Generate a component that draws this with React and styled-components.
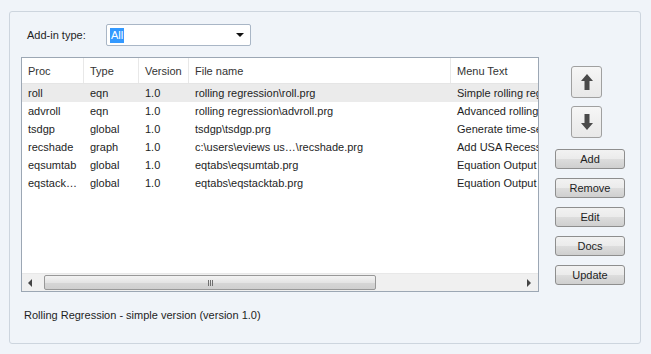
import React from "react";
import styled, { createGlobalStyle } from "styled-components";

const Global = createGlobalStyle`
  html, body { margin: 0; padding: 0; background: #f0f4f9; }
  body { font-family: "Liberation Sans", Tahoma, sans-serif; font-size: 11px; color: #1e1e1e; }
`;

const Page = styled.div`
  width: 651px;
  height: 354px;
  padding: 11px 10px 0 9px;
  box-sizing: border-box;
`;

const GroupBox = styled.div`
  width: 632px;
  height: 333px;
  box-sizing: border-box;
  border: 1px solid #cdd5de;
  border-radius: 3px;
  padding: 12px 0 0 11px;
  display: flex;
  flex-direction: column;
`;

const TypeRow = styled.div`
  display: flex;
  align-items: center;
  gap: 13px;
  padding-left: 6px;
  height: 22px;
`;

const Label = styled.span`
  width: 66px;
`;

const Combo = styled.div`
  width: 145px;
  height: 22px;
  box-sizing: border-box;
  border: 1px solid #a9b6c6;
  border-radius: 2px;
  background: #fff;
  display: flex;
  align-items: center;
  justify-content: space-between;
  padding: 0 6px 0 3px;
`;

const Selected = styled.span`
  background: #3399ff;
  color: #fff;
  padding: 1px 1px;
  line-height: 13px;
`;

const MainRow = styled.div`
  display: flex;
  margin-top: 11px;
`;

const ListBox = styled.div`
  width: 518px;
  height: 235px;
  box-sizing: border-box;
  border: 1px solid #9ca7b4;
  background: #fff;
  display: flex;
  flex-direction: column;
  overflow: hidden;
`;

const Header = styled.div`
  display: flex;
  height: 25px;
  border-bottom: 1px solid #e5e5e5;
  flex-shrink: 0;
`;

const HeadCell = styled.div`
  width: ${(p) => p.w}px;
  flex-shrink: 0;
  box-sizing: border-box;
  padding-left: 6px;
  display: flex;
  align-items: center;
  border-right: ${(p) => (p.last ? "none" : "1px solid #e8e8e8")};
  white-space: nowrap;
  overflow: hidden;
  color: #333;
`;

const Body = styled.div`
  flex: 1;
`;

const Row = styled.div`
  display: flex;
  height: 18px;
  align-items: center;
  background: ${(p) => (p.sel ? "#ebebeb" : "transparent")};
`;

const Cell = styled.div`
  width: ${(p) => p.w}px;
  flex-shrink: 0;
  box-sizing: border-box;
  padding-left: 6px;
  white-space: nowrap;
  overflow: hidden;
`;

const HScroll = styled.div`
  height: 17px;
  display: flex;
  align-items: center;
  background: #f0f0f0;
  border-top: 1px solid #e8e8e8;
  flex-shrink: 0;
`;

const ArrowBox = styled.div`
  width: 17px;
  height: 17px;
  display: flex;
  align-items: center;
  justify-content: center;
`;

const Track = styled.div`
  flex: 1;
  height: 17px;
  display: flex;
  align-items: center;
`;

const Thumb = styled.div`
  width: 332px;
  height: 15px;
  margin-left: 5px;
  box-sizing: border-box;
  border: 1px solid #989898;
  border-radius: 2px;
  background: linear-gradient(#f3f3f3, #e4e4e4 50%, #d6d6d6 51%, #cfcfcf);
  display: flex;
  align-items: center;
  justify-content: center;
`;

const Grip = styled.div`
  display: flex;
  gap: 1px;
`;

const GripLine = styled.span`
  width: 1px;
  height: 6px;
  background: #6f6f6f;
`;

const SideCol = styled.div`
  width: 92px;
  display: flex;
  flex-direction: column;
  align-items: flex-start;
  padding-top: 9px;
`;

const ArrowButton = styled.div`
  width: 31px;
  height: 32px;
  box-sizing: border-box;
  border: 1px solid #a0a0a0;
  border-radius: 3px;
  background: linear-gradient(#f6f6f6, #e8e8e8);
  display: flex;
  align-items: center;
  justify-content: center;
  margin-left: 32px;
  margin-bottom: ${(p) => p.mb}px;
`;

const Button = styled.div`
  width: 70px;
  height: 20px;
  box-sizing: border-box;
  border: 1px solid #8e8e8e;
  border-radius: 3px;
  background: linear-gradient(#f2f2f2, #ebebeb 50%, #dddddd 51%, #cfcfcf);
  display: flex;
  align-items: center;
  justify-content: center;
  margin-left: 16px;
  margin-bottom: 9px;
  color: #1e1e1e;
`;

const Status = styled.div`
  margin-top: 15px;
  padding-left: 3px;
`;

const cols = [62, 55, 50, 262, 90];
const heads = ["Proc", "Type", "Version", "File name", "Menu Text"];
const rows = [
  ["roll", "eqn", "1.0", "rolling regression\\roll.prg", "Simple rolling regression"],
  ["advroll", "eqn", "1.0", "rolling regression\\advroll.prg", "Advanced rolling regression"],
  ["tsdgp", "global", "1.0", "tsdgp\\tsdgp.prg", "Generate time-series"],
  ["recshade", "graph", "1.0", "c:\\users\\eviews us…\\recshade.prg", "Add USA Recession shading"],
  ["eqsumtab", "global", "1.0", "eqtabs\\eqsumtab.prg", "Equation Output Summary"],
  ["eqstack…", "global", "1.0", "eqtabs\\eqstacktab.prg", "Equation Output Stack"],
];

const Tri = ({ dir }) => (
  <svg width="5" height="8" viewBox="0 0 5 8">
    {dir === "left" ? (
      <path d="M4 0 L0 4 L4 8 Z" fill="#444" />
    ) : (
      <path d="M0 0 L4 4 L0 8 Z" fill="#444" />
    )}
  </svg>
);

const BigArrow = ({ up }) => (
  <svg width="12" height="16" viewBox="0 0 12 16">
    <g transform={up ? "" : "rotate(180 6 8)"}>
      <path d="M6 0 L12 7 L8.5 7 L8.5 16 L3.5 16 L3.5 7 L0 7 Z" fill="#4a4a4a" />
    </g>
  </svg>
);

export default function App() {
  return (
    <Page>
      <Global />
      <GroupBox>
        <TypeRow>
          <Label>Add-in type:</Label>
          <Combo>
            <Selected>All</Selected>
            <svg width="8" height="4" viewBox="0 0 8 4">
              <path d="M0 0 L8 0 L4 4 Z" fill="#111" />
            </svg>
          </Combo>
        </TypeRow>
        <MainRow>
          <ListBox>
            <Header>
              {heads.map((h, i) => (
                <HeadCell key={h} w={cols[i]} last={i === heads.length - 1}>
                  {h}
                </HeadCell>
              ))}
            </Header>
            <Body>
              {rows.map((r, ri) => (
                <Row key={ri} sel={ri === 0}>
                  {r.map((c, ci) => (
                    <Cell key={ci} w={cols[ci]}>
                      {c}
                    </Cell>
                  ))}
                </Row>
              ))}
            </Body>
            <HScroll>
              <ArrowBox>
                <Tri dir="left" />
              </ArrowBox>
              <Track>
                <Thumb>
                  <Grip>
                    <GripLine />
                    <GripLine />
                    <GripLine />
                  </Grip>
                </Thumb>
              </Track>
              <ArrowBox>
                <Tri dir="right" />
              </ArrowBox>
            </HScroll>
          </ListBox>
          <SideCol>
            <ArrowButton mb={8}>
              <BigArrow up />
            </ArrowButton>
            <ArrowButton mb={11}>
              <BigArrow />
            </ArrowButton>
            <Button>Add</Button>
            <Button>Remove</Button>
            <Button>Edit</Button>
            <Button>Docs</Button>
            <Button>Update</Button>
          </SideCol>
        </MainRow>
        <Status>Rolling Regression - simple version (version 1.0)</Status>
      </GroupBox>
    </Page>
  );
}
